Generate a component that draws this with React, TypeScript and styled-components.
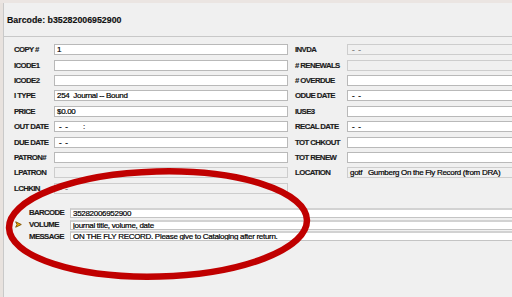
import React from "react";
import styled, { createGlobalStyle } from "styled-components";

const Global = createGlobalStyle`
  html, body { margin: 0; padding: 0; background: #f0f0f0; overflow: hidden; }
  body { width: 512px; height: 297px; font-family: "Liberation Sans", Arial, sans-serif; }
`;

const Window = styled.div`
  position: relative;
  width: 512px;
  height: 297px;
  overflow: hidden;
  display: flex;
  flex-direction: column;
  background: #f0f0f0;
`;

const TopBand = styled.div`
  flex: none;
  height: 3px;
  background: #ebe5e2;
`;

const Body = styled.div`
  flex: 1;
  display: flex;
  min-height: 0;
`;

const LeftEdge = styled.div`
  flex: none;
  width: 3px;
  background: #e8e2de;
  border-right: 1px solid #c9c9c9;
`;

const Content = styled.div`
  flex: 1;
  min-width: 0;
  display: flex;
  flex-direction: column;
`;

const Header = styled.div`
  flex: none;
  height: 33px;
  display: flex;
  align-items: center;
  padding-left: 3px;
  border-bottom: 1px solid #c8c8c8;
  font-size: 8.8px;
  font-weight: bold;
  color: #111;
  -webkit-text-stroke: 0.15px #111;
`;

const FieldGrid = styled.div`
  display: grid;
  grid-template-columns: 40px 234px 59px 200px;
  grid-auto-rows: 11px;
  row-gap: 4.4px;
  padding: 7.3px 0 0 10px;
`;

const Label = styled.div<{ $indent?: boolean }>`
  align-self: center;
  padding-left: ${(p) => (p.$indent ? "7px" : "0")};
  font-size: 7.8px;
  font-weight: bold;
  letter-spacing: -0.6px;
  color: #1c1c1c;
  -webkit-text-stroke: 0.15px #1c1c1c;
  white-space: nowrap;
  line-height: 11px;
`;

const Box = styled.div<{ $disabled?: boolean; $dim?: boolean }>`
  box-sizing: border-box;
  height: 100%;
  border: 1px solid ${(p) => (p.$disabled ? "#cdcdcd" : "#b9b9b9")};
  background: ${(p) => (p.$disabled ? "#f0f0f0" : "#ffffff")};
  color: ${(p) => (p.$dim ? "#777" : "#000")};
  padding-left: 2px;
  font-size: 8px;
  letter-spacing: -0.3px;
  -webkit-text-stroke: 0.2px currentColor;
  line-height: 9px;
  white-space: pre;
  overflow: hidden;
`;

const Empty = styled.div``;

const BottomGrid = styled.div`
  display: grid;
  grid-template-columns: 15px 41px 460px;
  grid-auto-rows: 10px;
  row-gap: 1.7px;
  margin-top: 14px;
  padding-left: 10px;
`;

const BottomBox = styled.div`
  box-sizing: border-box;
  height: 100%;
  background: #fff;
  border-top: 2px solid #d2d2d2;
  border-bottom: 1px solid #c4c4c4;
  border-left: 1px solid #c4c4c4;
  padding-left: 2px;
  font-size: 8px;
  letter-spacing: -0.3px;
  -webkit-text-stroke: 0.2px #000;
  line-height: 7.5px;
  color: #000;
  white-space: pre;
  overflow: hidden;
`;

const ArrowCell = styled.div`
  display: flex;
  align-items: center;
  justify-content: flex-start;
  padding-left: 0.5px;
`;

const Overlay = styled.svg`
  position: absolute;
  left: 0;
  top: 0;
  width: 512px;
  height: 297px;
  pointer-events: none;
`;

type F = { label: string; value?: string; disabled?: boolean; dim?: boolean };

const left: F[] = [
  { label: "COPY #", value: "1" },
  { label: "ICODE1", value: "" },
  { label: "ICODE2", value: "" },
  { label: "I TYPE", value: "254  Journal -- Bound" },
  { label: "PRICE", value: "$0.00" },
  { label: "OUT DATE", value: " -  -        :" },
  { label: "DUE DATE", value: " -  -" },
  { label: "PATRON#", value: "" },
  { label: "LPATRON", value: "", disabled: true },
  { label: "LCHKIN", value: " -  -", disabled: true, dim: true },
];

const right: (F | null)[] = [
  { label: "INVDA", value: " -  -", disabled: true, dim: true },
  { label: "# RENEWALS", value: "", disabled: true },
  { label: "# OVERDUE", value: "" },
  { label: "ODUE DATE", value: " -  -" },
  { label: "IUSE3", value: "" },
  { label: "RECAL DATE", value: " -  -" },
  { label: "TOT CHKOUT", value: "" },
  { label: "TOT RENEW", value: "" },
  { label: "LOCATION", value: "gotf   Gumberg On the Fly Record (from DRA)", disabled: true },
  null,
];

const bottom = [
  { label: "BARCODE", value: "35282006952900" },
  { label: "VOLUME", value: "journal title, volume, date", arrow: true },
  { label: "MESSAGE", value: "ON THE FLY RECORD. Please give to Cataloging after return." },
];

export default function App() {
  return (
    <>
      <Global />
      <Window>
        <TopBand />
        <Body>
          <LeftEdge />
          <Content>
            <Header>Barcode: b35282006952900</Header>
            <FieldGrid>
              {left.map((l, i) => {
                const r = right[i];
                return (
                  <React.Fragment key={l.label}>
                    <Label>{l.label}</Label>
                    <Box $disabled={l.disabled} $dim={l.dim}>{l.value}</Box>
                    {r ? (
                      <>
                        <Label $indent>{r.label}</Label>
                        <Box $disabled={r.disabled} $dim={r.dim}>{r.value}</Box>
                      </>
                    ) : (
                      <>
                        <Empty />
                        <Empty />
                      </>
                    )}
                  </React.Fragment>
                );
              })}
            </FieldGrid>
            <BottomGrid>
              {bottom.map((b) => (
                <React.Fragment key={b.label}>
                  <ArrowCell>
                    {b.arrow && (
                      <svg width="7" height="7" viewBox="0 0 7 7">
                        <path d="M0.7 0.8 L6.3 3.5 L0.7 6.2 L2 3.5 Z" fill="#f2a900" stroke="#7a4f00" strokeWidth="0.9" strokeLinejoin="round" />
                      </svg>
                    )}
                  </ArrowCell>
                  <Label>{b.label}</Label>
                  <BottomBox>{b.value}</BottomBox>
                </React.Fragment>
              ))}
            </BottomGrid>
          </Content>
        </Body>
        <Overlay viewBox="0 0 512 297">
          <ellipse cx="158" cy="224" rx="149" ry="52.5" fill="none" stroke="#c00000" strokeWidth="6.5" transform="rotate(-1.5 158 224)" />
        </Overlay>
      </Window>
    </>
  );
}
